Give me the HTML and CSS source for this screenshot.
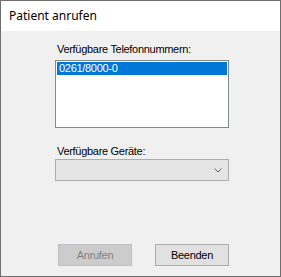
FILE: index.html
```html
<!DOCTYPE html>
<html lang="de">
<head>
<meta charset="utf-8">
<title>Patient anrufen</title>
<link rel="stylesheet" href="styles.css">
</head>
<body>
<div class="window">
  <div class="titlebar">Patient anrufen</div>
  <div class="content">
    <div class="label label-phones">Verfügbare Telefonnummern:</div>
    <div class="listbox">
      <div class="item selected">0261/8000-0</div>
    </div>
    <div class="label label-devices">Verfügbare Geräte:</div>
    <div class="combo">
      <svg class="chevron" width="8" height="5" viewBox="0 0 8 5"><path d="M0.5 0.5 L4 4 L7.5 0.5" fill="none" stroke="#606060" stroke-width="1"/></svg>
    </div>
    <div class="buttons">
      <div class="btn disabled">Anrufen</div>
      <div class="btn">Beenden</div>
    </div>
  </div>
</div>
</body>
</html>
```
FILE: styles.css
```css
html, body {
  margin: 0;
  padding: 0;
  background: #f0f0f0;
}
.window {
  width: 281px;
  height: 277px;
  box-sizing: border-box;
  border: 1px solid #6e6e6e;
  background: #f0f0f0;
  display: flex;
  flex-direction: column;
}
.titlebar {
  height: 30px;
  box-sizing: border-box;
  background: #ffffff;
  padding: 7px 0 0 8px;
  font-family: "Noto Sans", "Open Sans", sans-serif;
  font-size: 12px;
  line-height: 16px;
  color: #000;
}
.content {
  padding: 12px 0 0 54px;
  font-family: "Liberation Sans", Arial, sans-serif;
  font-size: 11px;
  line-height: 13px;
  letter-spacing: -0.3px;
  color: #000;
}
.label {
  padding-left: 2px;
  height: 13px;
}
.label-phones {
  margin-bottom: 4px;
}
.listbox {
  width: 174px;
  height: 68px;
  box-sizing: border-box;
  border: 1px solid #828790;
  background: #ffffff;
  padding: 1px;
}
.item {
  height: 13px;
  padding-left: 2px;
}
.selected {
  background: #0078d7;
  color: #ffffff;
}
.label-devices {
  margin-top: 17px;
  margin-bottom: 1px;
}
.combo {
  width: 174px;
  height: 22px;
  box-sizing: border-box;
  border: 1px solid #adadad;
  background: #e5e5e5;
  display: flex;
  align-items: center;
  justify-content: flex-end;
  padding-right: 6px;
}
.chevron {
  display: block;
}
.buttons {
  margin-top: 63px;
  display: flex;
  gap: 23px;
  padding-left: 3px;
}
.btn {
  width: 74px;
  height: 22px;
  box-sizing: border-box;
  border: 1px solid #adadad;
  background: #e1e1e1;
  text-align: center;
  line-height: 20px;
}
.btn.disabled {
  background: #cccccc;
  border-color: #bfbfbf;
  color: #838383;
}
```
